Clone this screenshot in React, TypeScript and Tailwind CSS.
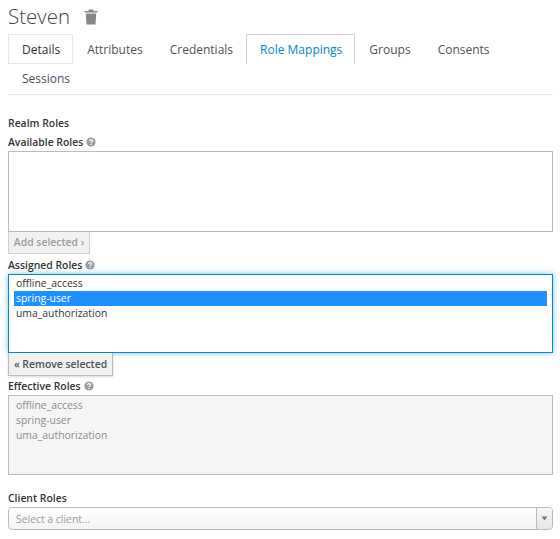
import React from "react";

function Help() {
  return (
    <svg width="10" height="10" viewBox="0 0 10 10" className="ml-[3px] inline-block">
      <circle cx="5" cy="5" r="4.6" fill="#9a9c9e" />
      <path d="M3.6 3.9c0-1.7 2.9-1.700 2.900 0 0 1-1.400 1-1.400 2" fill="none" stroke="#fff" strokeWidth="1.1" />
      <rect x="4.5" y="6.8" width="1.2" height="1.2" fill="#fff" />
    </svg>
  );
}

function Label({ children, help, className = "" }: { children: React.ReactNode; help?: boolean; className?: string }) {
  return (
    <div className={"flex h-[14px] items-center text-[10.4px] font-semibold leading-[14px] text-[#333] " + className}>
      {children}
      {help && <Help />}
    </div>
  );
}

const tabs = ["Details", "Attributes", "Credentials", "Role Mappings", "Groups", "Consents", "Sessions"];

export default function App() {
  return (
    <div className="h-[539px] w-[560px] overflow-hidden bg-white pl-2 pr-[7px] font-['Open_Sans',sans-serif] text-[10.4px] text-[#363636]">
      <div className="flex h-[34px] items-start pt-[1px]">
        <h1 className="w-[62px] text-[20.5px] font-light leading-[30px] text-[#444]">Steven</h1>
        <svg width="14" height="16" viewBox="0 0 14 16" className="ml-[14px] mt-[8px]">
          <path d="M5 0.6h4l.6 1.400H13.400v1.500H.6V2H4.400z" fill="#85878a" />
          <path d="M1.800 4.500h10.400l-.7 11H2.500z" fill="#85878a" />
        </svg>
      </div>
      <div className="flex h-[61px] flex-wrap content-start border-b border-[#ececec]">
        {tabs.map((t) => {
          const details = t === "Details";
          const role = t === "Role Mappings";
          const sessions = t === "Sessions";
          return (
            <div
              key={t}
              className={
                "h-[30px] pl-[13px] pr-[12px] text-[12px] leading-[28px] pt-px " +
                (sessions ? "-mt-px " : "") +
                (details
                  ? "border border-[#e6e6e6] text-[#333]"
                  : role
                    ? "border border-b-0 border-[#d1d1d1] text-[#0088ce]"
                    : "border border-transparent text-[#4d5258]")
              }
            >
              {t}
            </div>
          );
        })}
      </div>
      <Label className="mt-[21px]">Realm Roles</Label>
      <Label help className="mt-[5px]">Available Roles</Label>
      <div className="mt-[2px] h-[81px] border border-[#bbb] bg-white" />
      <div className="flex h-[22px] w-[82px] items-center justify-center border border-t-0 border-[#d1d1d1] bg-[#f1f1f1] text-[10.4px] font-semibold text-[#9c9c9c]">
        Add selected ›
      </div>
      <Label help className="mt-[4px]">Assigned Roles</Label>
      <div className="mt-[2px] h-[79px] border border-[#0088ce] bg-white p-[1px] shadow-[0_0_6px_rgba(0,136,206,0.5)]">
        <div className="mx-[4px] h-[15px] pl-[2px] leading-[15px]">offline_access</div>
        <div className="mx-[4px] h-[15px] bg-[#1e90ff] pl-[2px] leading-[15px] text-white">spring-user</div>
        <div className="mx-[4px] h-[15px] pl-[2px] leading-[15px]">uma_authorization</div>
      </div>
      <div className="relative flex h-[23px] w-[105px] items-center justify-center border border-t-0 border-[#bbb] bg-[#f1f1f1] pt-[2px] text-[10.4px] font-semibold text-[#4d5258] shadow-[0_1px_2px_rgba(0,0,0,0.15)]">
        « Remove selected
      </div>
      <Label help className="mt-[3px]">Effective Roles</Label>
      <div className="mt-[2px] h-[80px] border border-[#bbb] bg-[#f5f5f5] pl-[7px] pt-[2px] leading-[15px] text-[#8b8d8f]">
        <div>offline_access</div>
        <div>spring-user</div>
        <div>uma_authorization</div>
      </div>
      <Label className="mt-[16px]">Client Roles</Label>
      <div className="mt-[2px] flex h-[23px] items-stretch overflow-hidden rounded-[4px] border border-[#bbb] bg-gradient-to-b from-white to-[#f4f4f4]">
        <div className="flex-1 pl-[7px] pt-px leading-[21px] text-[#999]">Select a client...</div>
        <div className="flex w-[16px] items-center justify-center border-l border-[#bbb] bg-gradient-to-b from-[#f6f6f6] to-[#e6e6e6]">
          <svg width="7" height="5" viewBox="0 0 7 5"><path d="M0.500 0.500h6L3.500 4.500z" fill="#777" /></svg>
        </div>
      </div>
    </div>
  );
}
